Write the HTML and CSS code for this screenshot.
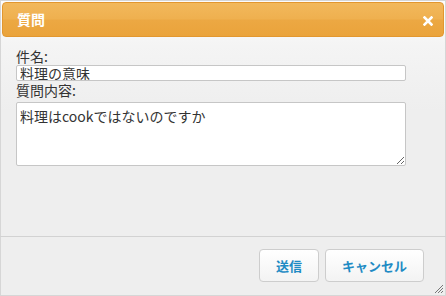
FILE: index.html
```html
<!DOCTYPE html>
<html lang="ja">
<head>
<meta charset="utf-8">
<link rel="stylesheet" href="styles.css">
</head>
<body>
<div class="dialog">
  <div class="titlebar">
    <span class="title">質問</span>
    <span class="close"><svg width="10" height="10" viewBox="0 0 10 10"><path d="M1.5 1.5L8.5 8.5M8.5 1.5L1.5 8.5" stroke="#fff" stroke-width="2.6" stroke-linecap="square"/></svg></span>
  </div>
  <div class="content">
    <label class="label">件名:</label>
    <input class="field" type="text" value="料理の意味">
    <label class="label">質問内容:</label>
    <textarea class="area">料理はcookではないのですか</textarea>
  </div>
  <div class="buttonpane">
    <button class="btn">送信</button>
    <button class="btn">キャンセル</button>
  </div>
  <span class="grip"><svg width="11" height="11" viewBox="0 0 11 11"><path d="M10 2L2 10M10 5L5 10M10 8L8 10" stroke="#777" stroke-width="1"/></svg></span>
</div>
</body>
</html>
```
FILE: styles.css
```css
html, body {
  margin: 0;
  padding: 0;
}
body {
  width: 446px;
  height: 296px;
  overflow: hidden;
  font-family: "Noto Sans CJK JP", "Noto Sans", sans-serif;
  color: #333;
}
.dialog {
  position: relative;
  box-sizing: border-box;
  width: 446px;
  height: 296px;
  border: 1px solid #d6d6d6;
  padding: 1px;
  background: linear-gradient(#fdfdfd 0, #f4f4f4 45px, #eeeeee 110px, #eeeeee 100%);
  display: flex;
  flex-direction: column;
}
.titlebar {
  box-sizing: border-box;
  height: 35px;
  flex: none;
  border: 1px solid #e2972f;
  border-radius: 4px;
  background: linear-gradient(#f2b85c 0, #efb04f 48%, #eca843 52%, #eaa33b 100%);
  display: flex;
  align-items: center;
  justify-content: space-between;
  padding: 0 10px 0 14px;
}
.title {
  color: #fff;
  font-weight: bold;
  font-size: 14px;
  line-height: 18px;
  margin-top: -2px;
}
.close {
  display: flex;
  width: 10px;
  height: 10px;
  margin-top: 2px;
}
.content {
  flex: 1;
  display: flex;
  flex-direction: column;
  align-items: flex-start;
  padding: 10px 14px 0 14px;
}
.label {
  display: block;
  font-size: 14px;
  line-height: 18px;
  height: 18px;
}
.field {
  box-sizing: border-box;
  width: 390px;
  height: 16px;
  margin: 0;
  padding: 0 3px;
  border: 1px solid #c6c6c6;
  border-radius: 2px;
  background: #fff;
  font-family: "Noto Sans CJK JP", "Noto Sans", sans-serif;
  font-size: 14px;
  line-height: 14px;
  color: #333;
  outline: none;
}
.area {
  box-sizing: border-box;
  width: 390px;
  height: 64px;
  margin: 3px 0 0 0;
  padding: 3px 3px;
  border: 1px solid #c6c6c6;
  border-radius: 2px;
  background: #fff;
  font-family: "Noto Sans CJK JP", "Noto Sans", sans-serif;
  font-size: 14px;
  line-height: 20px;
  color: #333;
  resize: both;
  outline: none;
}
.buttonpane {
  flex: none;
  height: 58px;
  box-sizing: border-box;
  margin: 0 -2px;
  border-top: 1px solid #d2d2d2;
  display: flex;
  justify-content: flex-end;
  align-items: flex-start;
  gap: 6px;
  padding: 12px 22px 0 0;
}
.btn {
  box-sizing: border-box;
  height: 33px;
  padding: 0 16px;
  border: 1px solid #cdcdcd;
  border-radius: 4px;
  background: linear-gradient(#ffffff, #f3f3f3);
  color: #1f8bc4;
  font-family: "Noto Sans CJK JP", "Noto Sans", sans-serif;
  font-weight: bold;
  font-size: 13px;
  line-height: 18px;
}
.grip {
  position: absolute;
  right: 1px;
  bottom: 1px;
  width: 11px;
  height: 11px;
  display: flex;
}
```
